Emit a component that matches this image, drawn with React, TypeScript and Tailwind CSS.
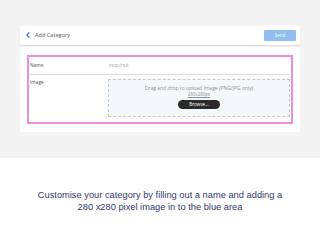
import React from "react";

export default function App() {
  return (
    <div className="w-[320px] h-[240px] bg-white overflow-hidden font-['Open_Sans',sans-serif]">
      <div className="h-[158px] bg-[#f3f3f3] px-[20px] pt-[26px]">
        <div className="h-[19px] bg-white flex items-center justify-between pl-[6px] pr-[4px] shadow-[0_1px_1px_rgba(0,0,0,0.08)]">
          <div className="flex items-center gap-[5px]">
            <svg width="4" height="6" viewBox="0 0 4 6">
              <path d="M3.3 0.5 L0.9 3 L3.3 5.5" fill="none" stroke="#2f7fd0" strokeWidth="1.2" />
            </svg>
            <span className="text-[5.6px] text-[#555]">Add Category</span>
          </div>
          <div className="w-[32px] h-[11px] bg-[#92bfef] rounded-[1px] flex items-center justify-center text-[4.5px] text-white">
            Send
          </div>
        </div>
        <div className="mt-[2px] h-[85px] bg-white px-[7px] pt-[8px]">
          <div className="h-[69px] border-2 border-solid border-[#f28ddd] px-[1px]">
            <div className="h-[18px] flex items-center border-b border-[#dcdcdc] text-[4.8px]">
              <span className="w-[79px] text-[#555]">Name</span>
              <span className="text-[#aaa]">required</span>
            </div>
            <div className="flex pt-[4px]">
              <span className="w-[78px] text-[4.8px] text-[#555] leading-[6px]">Image</span>
              <div className="w-[182px] h-[38px] bg-[#f3f9fa] border border-dashed border-[#c4c9cc] flex flex-col items-center pt-[5px]">
                <span className="text-[5px] text-[#8a8f93] leading-[6px]">Drag and drop to upload image (PNG/JPG only)</span>
                <span className="text-[4.4px] text-[#8a8f93] leading-[6px] underline">280x280px</span>
                <div className="mt-[3px] w-[42px] h-[9px] rounded-full bg-[#2b2b2b] flex items-center justify-center text-[4.6px] text-white">
                  Browse...
                </div>
              </div>
            </div>
          </div>
        </div>
      </div>
      <div className="pt-[31px] text-center font-['Liberation_Sans',sans-serif] text-[9.3px] leading-[12px] text-[#343b6e]">
        Customise your category by filling out a name and adding a
        <br />
        280 x280 pixel image in to the blue area
      </div>
    </div>
  );
}
